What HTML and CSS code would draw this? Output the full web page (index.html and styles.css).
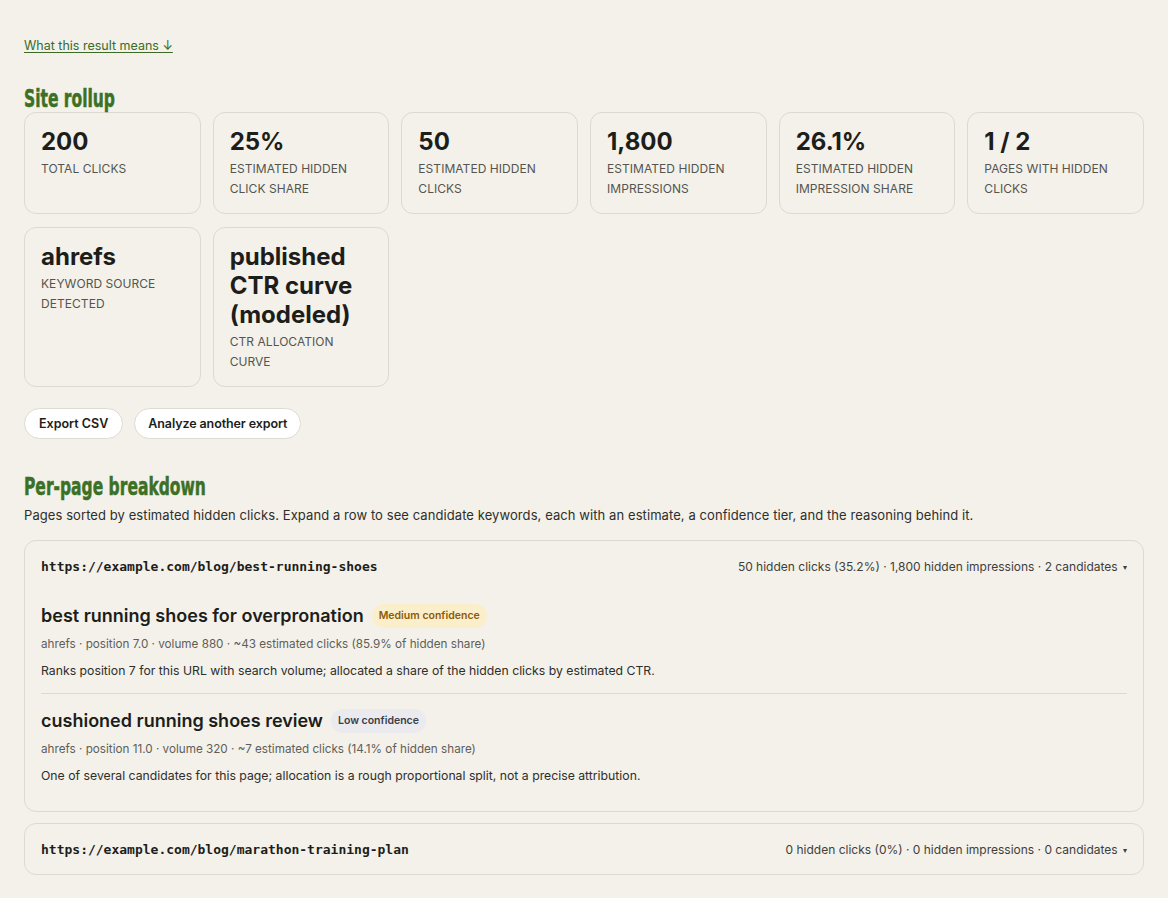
FILE: index.html
```html
<!DOCTYPE html>
<html lang="en">
<head>
    <meta charset="UTF-8">
    <meta name="viewport" content="width=device-width, initial-scale=1.0">
    <title>Hidden clicks result</title>
    <link rel="stylesheet" href="styles.css">
</head>
<body>
    <a class="explain-link" href="#explain">What this result means ↓</a>

    <h2 class="section-title"><span>Site rollup</span></h2>
    <div class="stats">
        <div class="stat">
            <div class="stat-value">200</div>
            <div class="stat-label">Total clicks</div>
        </div>
        <div class="stat">
            <div class="stat-value">25%</div>
            <div class="stat-label">Estimated hidden click share</div>
        </div>
        <div class="stat">
            <div class="stat-value">50</div>
            <div class="stat-label">Estimated hidden clicks</div>
        </div>
        <div class="stat">
            <div class="stat-value">1,800</div>
            <div class="stat-label">Estimated hidden impressions</div>
        </div>
        <div class="stat">
            <div class="stat-value">26.1%</div>
            <div class="stat-label">Estimated hidden impression share</div>
        </div>
        <div class="stat">
            <div class="stat-value">1 / 2</div>
            <div class="stat-label">Pages with hidden clicks</div>
        </div>
        <div class="stat">
            <div class="stat-value">ahrefs</div>
            <div class="stat-label">Keyword source detected</div>
        </div>
        <div class="stat">
            <div class="stat-value">published CTR curve (modeled)</div>
            <div class="stat-label">CTR allocation curve</div>
        </div>
    </div>

    <div class="actions">
        <button class="pill">Export CSV</button>
        <button class="pill">Analyze another export</button>
    </div>

    <h2 class="section-title"><span>Per-page breakdown</span></h2>
    <p class="intro">Pages sorted by estimated hidden clicks. Expand a row to see candidate keywords, each with an estimate, a confidence tier, and the reasoning behind it.</p>

    <div class="page-row open">
        <div class="page-head">
            <span class="page-url">https://example.com/blog/best-running-shoes</span>
            <span class="page-meta">50 hidden clicks (35.2%) · 1,800 hidden impressions · 2 candidates <span class="caret">▾</span></span>
        </div>
        <div class="candidates">
            <div class="candidate">
                <div class="cand-title">best running shoes for overpronation <span class="badge medium">Medium confidence</span></div>
                <div class="cand-meta">ahrefs · position 7.0 · volume 880 · ~43 estimated clicks (85.9% of hidden share)</div>
                <div class="cand-reason">Ranks position 7 for this URL with search volume; allocated a share of the hidden clicks by estimated CTR.</div>
            </div>
            <div class="candidate">
                <div class="cand-title">cushioned running shoes review <span class="badge low">Low confidence</span></div>
                <div class="cand-meta">ahrefs · position 11.0 · volume 320 · ~7 estimated clicks (14.1% of hidden share)</div>
                <div class="cand-reason">One of several candidates for this page; allocation is a rough proportional split, not a precise attribution.</div>
            </div>
        </div>
    </div>

    <div class="page-row">
        <div class="page-head">
            <span class="page-url">https://example.com/blog/marathon-training-plan</span>
            <span class="page-meta">0 hidden clicks (0%) · 0 hidden impressions · 0 candidates <span class="caret">▾</span></span>
        </div>
    </div>
</body>
</html>
```

FILE: styles.css
```css
body {
    margin: 0;
    padding: 34px 24px 24px;
    background: #f3f1ea;
    color: #1d1d1a;
    font-family: Inter, "Noto Sans", sans-serif;
}
.explain-link {
    display: inline-block;
    font-size: 12.5px;
    color: #3b6b26;
    text-decoration: underline;
    text-underline-offset: 2px;
}
.section-title {
    margin: 32px 0 0;
    font-family: "DejaVu Sans Condensed", sans-serif;
    font-weight: 700;
    font-size: 25px;
    line-height: 26px;
    color: #3b7025;
}
/* condensed display face, narrowed by hand */
.section-title span {
    display: inline-block;
    transform: scaleX(0.69);
    transform-origin: left center;
    white-space: nowrap;
    -webkit-text-stroke: 0.5px currentColor;
}
.stats {
    display: grid;
    grid-template-columns: repeat(6, 1fr);
    gap: 13px 12px;
}
.stat {
    border: 1px solid #dcd9d0;
    border-radius: 12px;
    padding: 14px 16px;
}
.stat-value {
    font-size: 24px;
    font-weight: 700;
    line-height: 29px;
    color: #1d1d1a;
}
.stat-label {
    margin-top: 3px;
    font-size: 12px;
    line-height: 20px;
    text-transform: uppercase;
    letter-spacing: 0.05px;
    color: #55544f;
}
.actions {
    display: flex;
    gap: 11px;
    margin-top: 21px;
}
.pill {
    font-family: inherit;
    font-size: 12.5px;
    font-weight: 600;
    color: #1d1d1a;
    background: #fff;
    border: 1px solid #dedbd3;
    border-radius: 16px;
    padding: 0 14px;
    height: 31px;
    cursor: pointer;
}
.pill + .pill {
    padding: 0 13px;
    letter-spacing: -0.1px;
}
.actions + .section-title {
    margin-top: 35px;
}
.intro {
    margin: 6px 0 16px;
    font-size: 13px;
    line-height: 18px;
    letter-spacing: 0.08px;
    color: #2e2e2a;
}
.page-row {
    border: 1px solid #dcd9d0;
    border-radius: 12px;
    padding: 16px;
    margin-bottom: 11px;
}
.page-head {
    display: flex;
    justify-content: space-between;
    align-items: center;
    min-height: 18px;
}
.page-url {
    font-family: "DejaVu Sans Mono", monospace;
    font-weight: 700;
    font-size: 13px;
}
.page-meta {
    font-size: 12px;
    color: #3f3e3a;
}
.caret {
    font-size: 8px;
    margin-left: 2px;
    vertical-align: middle;
}
.candidates {
    padding-top: 28px;
}
.candidate {
    padding: 0 0 14px;
}
.candidate:last-child {
    padding-bottom: 11px;
}
.candidate + .candidate {
    border-top: 1px solid #dcd9d0;
    padding-top: 14px;
}
.cand-title {
    font-size: 18px;
    font-weight: 600;
    line-height: 26px;
    display: flex;
    align-items: center;
    gap: 8px;
}
.badge {
    font-size: 10.5px;
    font-weight: 600;
    line-height: 14px;
    padding: 5px 7px;
    border-radius: 12px;
}
.badge.medium {
    background: #fbeecb;
    color: #8c5b08;
}
.badge.low {
    background: #eaeaef;
    color: #3b3d48;
}
.cand-meta {
    margin-top: 7px;
    font-size: 11.7px;
    line-height: 17px;
    color: #5f5e59;
}
.cand-reason {
    margin-top: 9px;
    font-size: 12.25px;
    line-height: 17px;
    color: #2e2e2a;
}
```
